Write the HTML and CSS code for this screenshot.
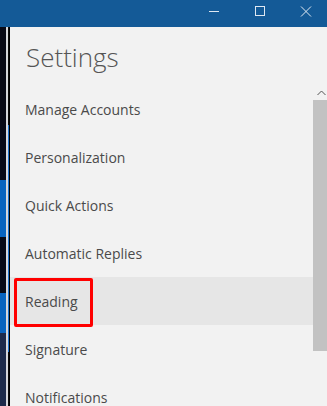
FILE: index.html
```html
<!DOCTYPE html>
<html>
<head>
<meta charset="utf-8">
<link rel="stylesheet" href="styles.css">
</head>
<body>
<div class="titlebar">
  <div class="controls">
    <div class="btn"><svg width="12" height="12" viewBox="0 0 12 12"><path d="M1 5.5H11" stroke="#dfe8f2" stroke-width="1"/></svg></div>
    <div class="btn"><svg width="12" height="12" viewBox="0 0 12 12"><rect x="1.5" y="0.5" width="9" height="9" fill="none" stroke="#dfe8f2" stroke-width="1"/></svg></div>
    <div class="btn"><svg width="12" height="12" viewBox="0 0 12 12"><path d="M1 0.5L11 10.5M11 0.5L1 10.5" stroke="#dfe8f2" stroke-width="1"/></svg></div>
  </div>
</div>
<div class="window">
  <div class="strip">
    <div class="desk">
      <div class="seg dark s1"></div>
      <div class="seg blue s2"></div>
      <div class="seg dark s3"></div>
      <div class="seg blue s4"></div>
      <div class="seg navy s5"></div>
    </div>
    <div class="light"></div>
    <div class="accent">
      <div class="a1"></div>
      <div class="a2"></div>
      <div class="a3"></div>
    </div>
    <div class="edge"></div>
  </div>
  <div class="panel">
    <h1 class="title">Settings</h1>
    <ul class="menu">
      <li class="item">Manage Accounts</li>
      <li class="item">Personalization</li>
      <li class="item">Quick Actions</li>
      <li class="item">Automatic Replies</li>
      <li class="item active">Reading<span class="mark"></span></li>
      <li class="item">Signature</li>
      <li class="item">Notifications</li>
    </ul>
    <div class="scroll">
      <svg class="arrow" width="9" height="6" viewBox="0 0 9 6"><path d="M0.5 5L4.5 1L8.5 5" fill="none" stroke="#555" stroke-width="1"/></svg>
      <div class="thumb"></div>
    </div>
  </div>
</div>
</body>
</html>
```
FILE: styles.css
```css
html, body {
  margin: 0;
  padding: 0;
  width: 327px;
  height: 406px;
  overflow: hidden;
  background: #f2f2f2;
}
.titlebar {
  height: 27px;
  background: #145a97;
  display: flex;
  justify-content: flex-end;
}
.controls {
  display: flex;
  margin-right: -2px;
}
.btn {
  width: 46px;
  height: 27px;
  display: flex;
  align-items: flex-start;
  justify-content: center;
  padding-top: 6px;
  box-sizing: border-box;
}
.btn svg { display: block; }
.window {
  display: flex;
  height: 379px;
}
.strip {
  display: flex;
  width: 10px;
  flex: none;
}
.desk {
  width: 6px;
  display: flex;
  flex-direction: column;
}
.seg.dark { background: #080a16; }
.seg.blue { background: #0864bf; }
.seg.navy { background: #1d2b4b; flex: 1; }
.s1 { height: 153px; }
.s2 { height: 57px; }
.s3 { height: 56px; }
.s4 { height: 40px; }
.light { width: 2px; background: #d6d8dc; }
.accent { width: 1px; display: flex; flex-direction: column; }
.a1 { height: 98px; background: #0b0b0b; }
.a2 { height: 227px; background: #1a6fc9; }
.a3 { flex: 1; background: #0b0b0b; }
.edge { width: 1px; background: #000; }
.panel {
  flex: 1;
  background: #f2f2f2;
  position: relative;
  font-family: "Open Sans", "Noto Sans", sans-serif;
}
.title {
  margin: 0;
  height: 58px;
  box-sizing: border-box;
  padding: 12px 0 0 16px;
  font-size: 26px;
  font-weight: 300;
  color: #555;
  line-height: 36px;
}
.menu {
  list-style: none;
  margin: 0;
  padding: 0;
}
.item {
  height: 48px;
  box-sizing: border-box;
  padding-top: 2px;
  line-height: 46px;
  padding-left: 15px;
  font-size: 14px;
  color: #4a4a4a;
  position: relative;
}
.item.active { background: #e6e6e6; }
.mark {
  position: absolute;
  left: 4px;
  top: 1px;
  width: 79px;
  height: 49px;
  box-sizing: border-box;
  border: 3px solid #ff0000;
  border-radius: 2px;
}
.scroll {
  position: absolute;
  top: 60px;
  right: -2px;
  width: 16px;
}
.arrow {
  display: block;
  margin: 3px auto 0;
}
.thumb {
  margin-top: 4px;
  height: 251px;
  background: #c2c2c2;
}
```
